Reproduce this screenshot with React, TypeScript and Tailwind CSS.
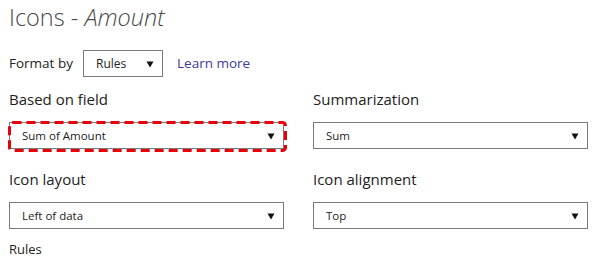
import React from 'react';

const font = { fontFamily: '"Segoe UI", "Open Sans", sans-serif' };

function Caret() {
  return (
    <svg width="8" height="8" viewBox="0 0 8 8" aria-hidden>
      <path d="M0.5 1.5h7L4 7.5z" fill="#111" />
    </svg>
  );
}

function Select({ value, className = '' }: { value: string; className?: string }) {
  return (
    <div
      className={
        'flex h-[27px] items-center justify-between border border-[#7a7a7a] bg-white pl-[12px] pr-[8px] text-[11.5px] text-[#222] ' +
        className
      }
    >
      <span>{value}</span>
      <Caret />
    </div>
  );
}

function Field({ label, children }: { label: string; children: React.ReactNode }) {
  return (
    <div className="flex w-[275px] flex-col">
      <div className="h-[30px] text-[15px] leading-[14px] text-[#222]">{label}</div>
      {children}
    </div>
  );
}

export default function App() {
  return (
    <div className="h-[261px] w-[597px] bg-white px-[9px] pt-[1px]" style={font}>
      <h1 className="text-[23.5px] leading-[32px] font-light text-[#4a4a4a]">
        Icons - <span className="italic">Amount</span>
      </h1>

      <div className="mt-[17px] flex items-center text-[13.5px] text-[#222]">
        <span className="w-[74px]">Format by</span>
        <Select value="Rules" className="w-[80px] pl-[5px] text-[12px]" />
        <a href="#" className="ml-[14px] text-[#3b3ba0]">Learn more</a>
      </div>

      <div className="mt-[15px] grid grid-cols-[275px_275px] gap-x-[29px] gap-y-[23px]">
        <Field label="Based on field">
          <div className="relative">
            <Select value="Sum of Amount" />
            <svg
              className="pointer-events-none absolute -top-[1px] -left-[1px]"
              width="279"
              height="31"
              viewBox="0 0 279 31"
              aria-hidden
            >
              <rect x="1.5" y="1.5" width="276" height="28" rx="3" fill="none" stroke="#e8000b" strokeWidth="3" strokeDasharray="9 5" />
            </svg>
          </div>
        </Field>
        <Field label="Summarization">
          <Select value="Sum" />
        </Field>
        <Field label="Icon layout">
          <Select value="Left of data" />
        </Field>
        <Field label="Icon alignment">
          <Select value="Top" />
        </Field>
      </div>

      <div className="mt-[11px] text-[13px] text-[#222]">Rules</div>
    </div>
  );
}
